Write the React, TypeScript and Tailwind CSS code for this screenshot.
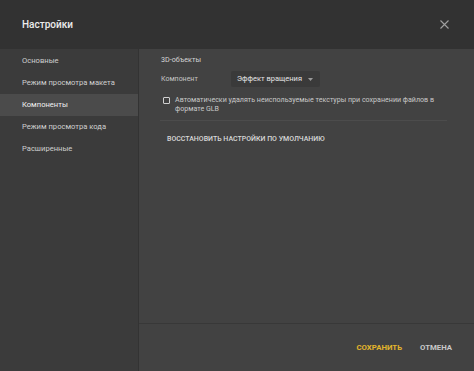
import React from "react";

export default function App() {
  const items = ["Основные", "Режим просмотра макета", "Компоненты", "Режим просмотра кода", "Расширенные"];
  return (
    <div className="w-[474px] h-[371px] flex flex-col bg-[#424242] overflow-hidden" style={{ fontFamily: "Roboto, 'Noto Sans', sans-serif" }}>
      <div className="h-[49px] shrink-0 bg-[#323232] flex items-center justify-between pl-[22px] pr-[25px]">
        <span className="text-[10px] text-[#ececec] font-medium">Настройки</span>
        <svg width="9" height="9" viewBox="0 0 9 9" className="text-[#a0a0a0]">
          <path d="M0.5 0.5L8.5 8.5M8.5 0.5L0.5 8.5" stroke="currentColor" strokeWidth="1.1" />
        </svg>
      </div>
      <div className="flex flex-1 min-h-0">
        <div className="w-[139px] shrink-0 bg-[#3b3b3b] border-r border-[#333333] flex flex-col pt-[1px]">
          {items.map((t, i) => (
            <div
              key={t}
              className={
                "h-[22px] flex items-center pl-[22px] text-[7.6px] " +
                (i === 2 ? "bg-[#4b4b4b] text-[#f0f0f0]" : "text-[#cfcfcf]")
              }
            >
              {t}
            </div>
          ))}
        </div>
        <div className="flex-1 flex flex-col">
          <div className="flex-1 pl-[22px] pr-[26px] pt-[6px]">
            <div className="text-[7.2px] text-[#d4d4d4] h-[11px] flex items-center">3D-объекты</div>
            <div className="flex items-center mt-[5px] h-[16px]">
              <span className="text-[7px] text-[#c4c4c4] w-[70px]">Компонент</span>
              <div className="h-[16px] w-[89px] bg-[#3a3a3a] rounded-[2px] flex items-center justify-between pl-[6px] pr-[7px]">
                <span className="text-[7.5px] text-[#e4e4e4]">Эффект вращения</span>
                <svg width="5" height="3" viewBox="0 0 5 3"><path d="M0 0H5L2.5 3Z" fill="#9a9a9a" /></svg>
              </div>
            </div>
            <div className="flex items-start mt-[8px]">
              <div className="mt-[2px] ml-[2px] w-[7px] h-[7px] border border-[#d0d0d0] rounded-[1px] shrink-0" />
              <div className="ml-[5px] text-[7.1px] leading-[9px] text-[#c8c8c8] pr-[6px]">
                Автоматически удалять неиспользуемые текстуры при сохранении файлов в формате GLB
              </div>
            </div>
            <div className="mt-[7px] h-px bg-[#4c4c4c] w-[287px] -ml-[1px]" />
            <div className="mt-[13px] pl-[6px] text-[7px] font-medium text-[#d8d8d8]">ВОССТАНОВИТЬ НАСТРОЙКИ ПО УМОЛЧАНИЮ</div>
          </div>
          <div className="h-[48px] shrink-0 border-t border-[#383838] flex items-center justify-end pr-[22px] gap-[18px] pt-[1px]">
            <span className="text-[7.8px] font-bold text-[#e2b52c]">СОХРАНИТЬ</span>
            <span className="text-[7.8px] font-bold text-[#c8c8c8]">ОТМЕНА</span>
          </div>
        </div>
      </div>
    </div>
  );
}
